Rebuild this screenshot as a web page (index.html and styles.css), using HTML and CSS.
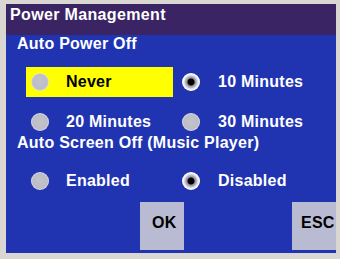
FILE: index.html
```html
<!DOCTYPE html>
<html>
<head>
<meta charset="utf-8">
<link rel="stylesheet" href="styles.css">
</head>
<body>
<div class="frame">
  <div class="window">
    <div class="title">Power Management</div>
    <div class="content">
      <div class="heading">Auto Power Off</div>
      <div class="grid power">
        <div class="opt current"><span class="radio"></span><span class="label">Never</span></div>
        <div class="opt"><span class="radio on"></span><span class="label">10 Minutes</span></div>
        <div class="opt"><span class="radio"></span><span class="label">20 Minutes</span></div>
        <div class="opt"><span class="radio"></span><span class="label">30 Minutes</span></div>
      </div>
      <div class="heading">Auto Screen Off (Music Player)</div>
      <div class="grid screen">
        <div class="opt"><span class="radio"></span><span class="label">Enabled</span></div>
        <div class="opt"><span class="radio on"></span><span class="label">Disabled</span></div>
      </div>
      <div class="buttons">
        <div class="btn ok">OK</div>
        <div class="btn esc">ESC</div>
      </div>
    </div>
  </div>
</div>
</body>
</html>
```
FILE: styles.css
```css
html, body {
  margin: 0;
  padding: 0;
  background: #ffffff;
}
.frame {
  width: 340px;
  height: 259px;
  box-sizing: border-box;
  padding: 4px 4px 6px 6px;
  background: #dad7d3;
  font-family: "Liberation Sans", Arial, sans-serif;
  font-weight: bold;
  font-size: 16px;
  letter-spacing: 0.25px;
  color: #ffffff;
}
.window {
  width: 330px;
  height: 249px;
  background: #2034b2;
  display: flex;
  flex-direction: column;
}
.title {
  height: 31px;
  box-sizing: border-box;
  background: #3b2464;
  padding: 2px 0 0 4px;
  line-height: 18px;
  letter-spacing: 0.35px;
}
.content {
  display: flex;
  flex-direction: column;
}
.heading {
  line-height: 18px;
  padding-left: 11px;
}
.grid {
  display: grid;
  grid-template-columns: 147px 1fr;
  margin-left: 20px;
}
.power {
  margin-top: 14px;
  grid-template-rows: 30px 24px;
  row-gap: 13px;
}
.screen {
  margin-top: 17px;
  grid-template-rows: 24px;
}
.opt {
  display: flex;
  align-items: center;
  gap: 17px;
  padding-left: 5px;
  line-height: 18px;
}
.opt:nth-child(even) {
  padding-left: 9px;
  gap: 18px;
}
.opt.current {
  background: #ffff00;
  color: #000000;
}
.radio {
  width: 18px;
  height: 18px;
  border-radius: 50%;
  flex: none;
  box-sizing: border-box;
  background: radial-gradient(circle, #c2c2ca 0, #bdbdc7 58%, #dcdce6 68%, #ffffff 80%, #f2f2f8 100%);
}
.radio.on {
  background: radial-gradient(circle, #000000 0, #000000 3px, #8e8c9e 4px, #b6b4c4 5.5px, #e6e6ee 7px, #ffffff 8px, #f2f2f8 100%);
}
.buttons {
  display: flex;
  justify-content: space-between;
  margin: 9px 0 0 134px;
  height: 48px;
}
.btn {
  width: 44px;
  height: 48px;
  box-sizing: border-box;
  background: #b8bbd2;
  color: #000000;
  display: flex;
  align-items: center;
  line-height: 18px;
  padding-bottom: 6px;
}
.btn.ok { padding-left: 12px; }
.btn.esc { padding-left: 9px; }
```
